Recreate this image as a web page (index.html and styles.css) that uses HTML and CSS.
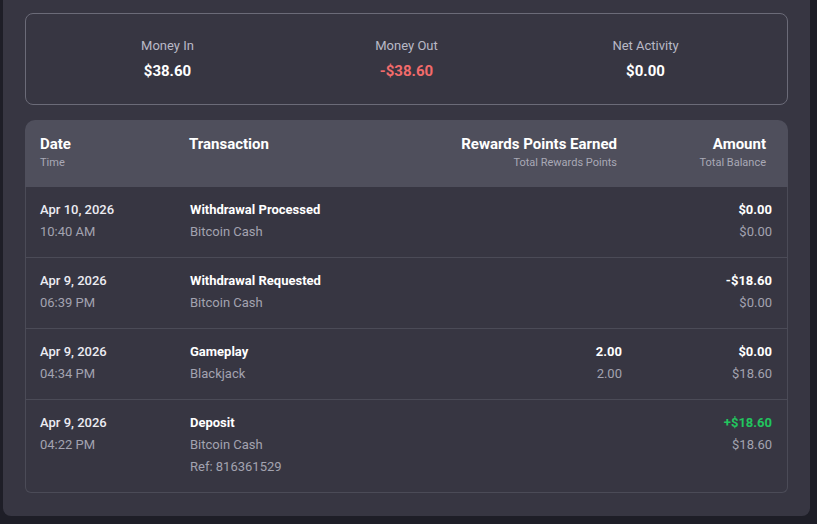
FILE: index.html
```html
<!DOCTYPE html>
<html>
<head>
<meta charset="utf-8">
<link rel="stylesheet" href="styles.css">
</head>
<body>
<div class="panel">
  <section class="summary">
    <div class="stat">
      <div class="stat-label">Money In</div>
      <div class="stat-value">$38.60</div>
    </div>
    <div class="stat">
      <div class="stat-label">Money Out</div>
      <div class="stat-value neg">-$38.60</div>
    </div>
    <div class="stat">
      <div class="stat-label">Net Activity</div>
      <div class="stat-value">$0.00</div>
    </div>
  </section>

  <section class="table">
    <div class="thead">
      <div class="th"><div class="th-title">Date</div><div class="th-sub">Time</div></div>
      <div class="th"><div class="th-title">Transaction</div></div>
      <div class="th right"><div class="th-title">Rewards Points Earned</div><div class="th-sub">Total Rewards Points</div></div>
      <div class="th right"><div class="th-title">Amount</div><div class="th-sub">Total Balance</div></div>
    </div>
    <div class="tbody">
      <div class="row">
        <div class="cell"><div class="date">Apr 10, 2026</div><div class="sub">10:40 AM</div></div>
        <div class="cell"><div class="title">Withdrawal Processed</div><div class="sub">Bitcoin Cash</div></div>
        <div class="cell right"></div>
        <div class="cell right"><div class="title">$0.00</div><div class="sub">$0.00</div></div>
      </div>
      <div class="row">
        <div class="cell"><div class="date">Apr 9, 2026</div><div class="sub">06:39 PM</div></div>
        <div class="cell"><div class="title">Withdrawal Requested</div><div class="sub">Bitcoin Cash</div></div>
        <div class="cell right"></div>
        <div class="cell right"><div class="title">-$18.60</div><div class="sub">$0.00</div></div>
      </div>
      <div class="row">
        <div class="cell"><div class="date">Apr 9, 2026</div><div class="sub">04:34 PM</div></div>
        <div class="cell"><div class="title">Gameplay</div><div class="sub">Blackjack</div></div>
        <div class="cell right"><div class="title">2.00</div><div class="sub">2.00</div></div>
        <div class="cell right"><div class="title">$0.00</div><div class="sub">$18.60</div></div>
      </div>
      <div class="row">
        <div class="cell"><div class="date">Apr 9, 2026</div><div class="sub">04:22 PM</div></div>
        <div class="cell"><div class="title">Deposit</div><div class="sub">Bitcoin Cash</div><div class="sub">Ref: 816361529</div></div>
        <div class="cell right"></div>
        <div class="cell right"><div class="title pos">+$18.60</div><div class="sub">$18.60</div></div>
      </div>
    </div>
  </section>
</div>
</body>
</html>
```

FILE: styles.css
```css
* { box-sizing: border-box; }
html, body {
  margin: 0;
  padding: 0;
  background: #1e1e27;
  font-family: Roboto, "Noto Sans", Arial, sans-serif;
}
.panel {
  margin-left: 3px;
  width: 807px;
  background: #373642;
  padding: 13px 22px 23px;
  border-radius: 0 0 8px 8px;
}
.summary {
  display: grid;
  grid-template-columns: 1fr 1fr 1fr;
  border: 1px solid #6b6b78;
  border-radius: 8px;
  padding: 22px 22px 24px;
  text-align: center;
}
.stat-label {
  font-size: 13px;
  line-height: 20px;
  color: #b9b9c6;
  margin-bottom: 6px;
}
.stat-value {
  font-size: 15px;
  line-height: 18px;
  font-weight: 700;
  color: #ffffff;
}
.stat-value.neg { color: #f26b6b; }

.table { margin-top: 15px; }
.thead {
  display: grid;
  grid-template-columns: 149px 1fr auto 149px;
  background: #4f4f5c;
  border-radius: 10px 10px 0 0;
  padding: 15px 22px 17px 15px;
}
.th-title {
  font-size: 15px;
  line-height: 18px;
  font-weight: 700;
  color: #ffffff;
}
.th-sub {
  font-size: 11px;
  line-height: 14px;
  margin-top: 3px;
  color: #a9a9b6;
}
.right { text-align: right; }

.tbody {
  border: 1px solid #4b4b57;
  border-top: none;
  border-radius: 0 0 6px 6px;
}
.row {
  display: grid;
  grid-template-columns: 150px 1fr auto 150px;
  padding: 12px 15px 14px 14px;
  border-top: 1px solid #4b4b57;
}
.row:first-child { border-top: none; }
.cell { line-height: 22px; }
.date {
  font-size: 13px;
  font-weight: 500;
  color: #ececf2;
}
.title {
  font-size: 13px;
  font-weight: 700;
  color: #ffffff;
}
.title.pos { color: #22c55e; }
.sub {
  font-size: 13px;
  color: #a3a3b0;
}
```
